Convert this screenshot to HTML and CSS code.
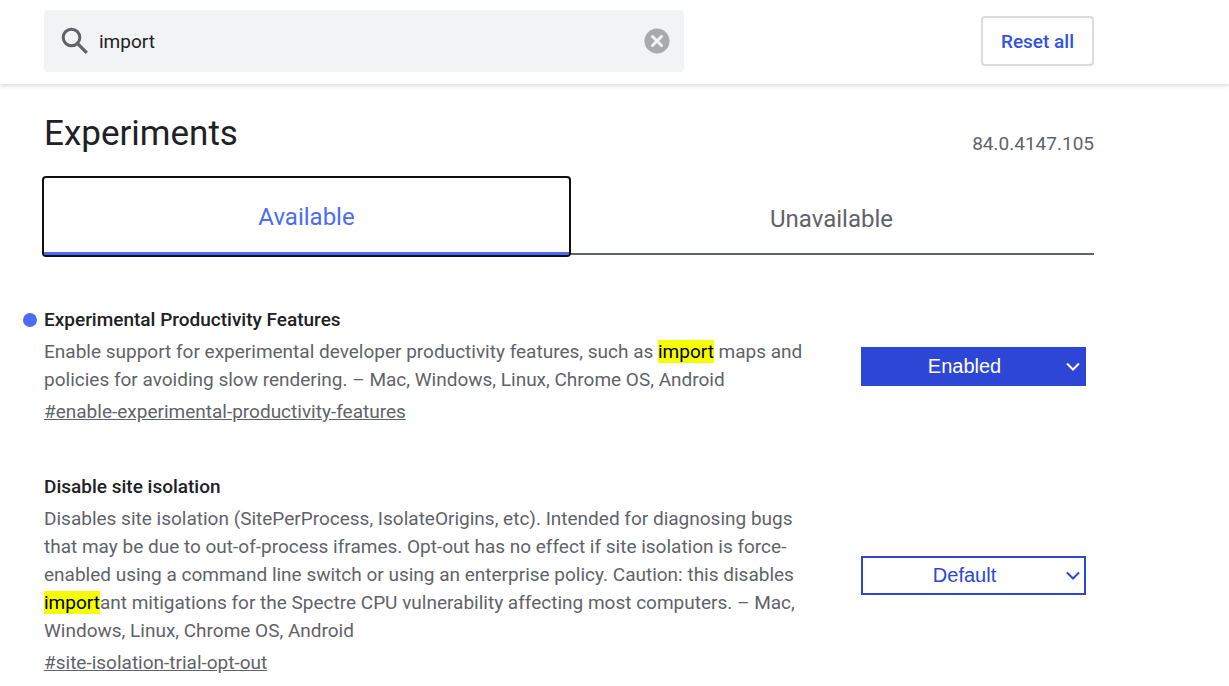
FILE: index.html
```
<!DOCTYPE html>
<html lang="en">
<head>
<meta charset="utf-8">
<title>Experiments</title>
<link rel="stylesheet" href="styles.css">
</head>
<body>
<header class="topbar">
  <div class="topbar-inner">
    <div class="search">
      <svg class="search-icon" viewBox="0 0 28 28" aria-hidden="true"><circle cx="10.500" cy="10.500" r="8.300" fill="none" stroke="#5f6368" stroke-width="3"/><path d="M16.300 16.300L25.800 25.800" stroke="#5f6368" stroke-width="3.200"/></svg>
      <input class="search-input" type="text" value="import" aria-label="Search flags">
      <button class="clear" type="button" aria-label="Clear search">
        <svg viewBox="0 0 26 26" aria-hidden="true"><circle cx="13" cy="13" r="12.500" fill="#a8aaac"/><path d="M8.500 8.500L17.500 17.500M17.500 8.500L8.500 17.500" stroke="#f1f3f4" stroke-width="3" stroke-linecap="round"/></svg>
      </button>
    </div>
    <button class="reset" type="button">Reset all</button>
  </div>
</header>
<main class="content">
  <div class="heading">
    <h1 class="title">Experiments</h1>
    <span class="version">84.0.4147.105</span>
  </div>
  <div class="tabs" role="tablist">
    <button class="tab tab-selected" type="button" role="tab" aria-selected="true">Available</button>
    <button class="tab" type="button" role="tab" aria-selected="false">Unavailable</button>
  </div>
  <section class="experiment">
    <div class="details">
      <h2 class="name name-changed">Experimental Productivity Features</h2>
      <p class="description">Enable support for experimental developer productivity features, such as <mark>import</mark> maps and policies for avoiding slow rendering. – Mac, Windows, Linux, Chrome OS, Android</p>
      <a class="permalink" href="#enable-experimental-productivity-features">#enable-experimental-productivity-features</a>
    </div>
    <div class="picker picker-changed">
      <select class="choice" aria-label="Experimental Productivity Features"><option>Enabled</option></select>
      <svg class="chevron" viewBox="0 0 14 10" aria-hidden="true"><path d="M1 1.500L7 7.500L13 1.500" fill="none" stroke="currentColor" stroke-width="2"/></svg>
    </div>
  </section>
  <section class="experiment">
    <div class="details">
      <h2 class="name">Disable site isolation</h2>
      <p class="description">Disables site isolation (SitePerProcess, IsolateOrigins, etc). Intended for diagnosing bugs that may be due to out-of-process iframes. Opt-out has no effect if site isolation is force-enabled using a command line switch or using an enterprise policy. Caution: this disables <mark>import</mark>ant mitigations for the Spectre CPU vulnerability affecting most computers. – Mac, Windows, Linux, Chrome OS, Android</p>
      <a class="permalink" href="#site-isolation-trial-opt-out">#site-isolation-trial-opt-out</a>
    </div>
    <div class="picker">
      <select class="choice" aria-label="Disable site isolation"><option>Default</option></select>
      <svg class="chevron" viewBox="0 0 14 10" aria-hidden="true"><path d="M1 1.500L7 7.500L13 1.500" fill="none" stroke="currentColor" stroke-width="2"/></svg>
    </div>
  </section>
</main>
</body>
</html>
```
FILE: styles.css
```
* { box-sizing: border-box; }
body { margin: 0; background: #fff; color: #202124; font-family: Roboto, sans-serif; font-size: 19px; }
button, input { font: inherit; }
.topbar { padding: 10px 135px 12px 44px; box-shadow: 0 2px 4px rgba(0, 0, 0, 0.14); }
.topbar-inner { display: flex; align-items: center; justify-content: space-between; }
.search { display: flex; align-items: center; flex: 0 1 640px; height: 62px; padding: 0 14px 0 17px; border-radius: 4px; background: #f1f3f4; }
.search-icon { width: 28px; height: 28px; flex: none; }
.search-input { flex: 1; min-width: 0; padding: 0 10px; border: 0; outline: 0; background: transparent; color: #202124; }
.clear { display: flex; width: 26px; height: 26px; padding: 0; border: 0; background: transparent; }
.clear svg { width: 26px; height: 26px; }
.reset { height: 50px; padding: 0 18px; border: 2px solid #dadce0; border-radius: 4px; background: #fff; color: #3152ea; font-weight: 500; white-space: nowrap; }
.content { padding: 0 135px 8px 44px; }
.heading { display: flex; justify-content: space-between; align-items: flex-end; padding-top: 26px; }
.title { margin: 0; font-size: 35px; line-height: 48px; font-weight: 400; }
.version { color: #5f6368; line-height: 28px; }
.tabs { display: flex; margin: 20px 0 51px; }
.tab { flex: 1; height: 77px; padding: 6px 0 0; border: 0; border-bottom: 2px solid #5f6368; background: #fff; color: #5f6368; font-size: 24px; }
.tab-selected { position: relative; z-index: 1; padding: 4px 0 0; border-bottom: 3px solid #4d6bf5; outline: 2px solid #101010; border-radius: 2px; color: #4d6bf5; }
.experiment { display: flex; align-items: center; justify-content: space-between; padding-right: 8px; margin-top: 47px; }
.details { flex: 0 1 781px; }
.name { position: relative; margin: 0 0 4px; font-size: 19px; line-height: 28px; font-weight: 500; }
.name-changed::before { content: ""; position: absolute; left: -21px; top: 7px; width: 14px; height: 14px; border-radius: 50%; background: #4d6bf5; }
.description { margin: 0 0 4px; color: #5f6368; line-height: 28px; }
mark { background: #f6ff00; color: #000; }
.permalink { color: #5f6368; line-height: 28px; }
.picker { position: relative; flex: 0 0 225px; color: #2d46d6; }
.picker-changed { color: #fff; }
.choice { display: block; width: 100%; height: 39px; padding: 0 18px 0 0; appearance: none; border: 2px solid #2d46d6; border-radius: 0; background: #fff; color: inherit; font-family: "Liberation Sans", sans-serif; font-size: 20px; text-align: center; text-align-last: center; }
.picker-changed .choice { background: #2d46d6; }
.chevron { position: absolute; right: 6px; top: 15px; width: 14px; height: 10px; pointer-events: none; }
```
